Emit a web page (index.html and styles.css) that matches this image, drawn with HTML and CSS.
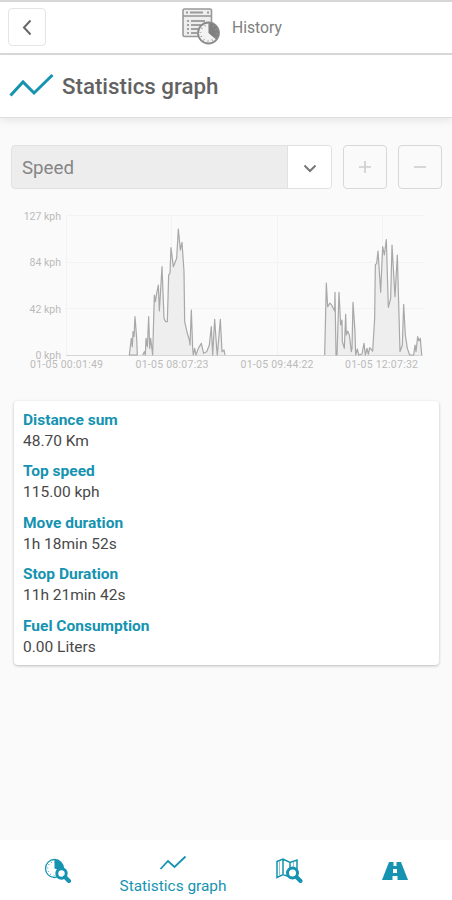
FILE: index.html
```html
<!DOCTYPE html>
<html lang="en">
<head>
<meta charset="utf-8">
<title>Statistics graph</title>
<link rel="stylesheet" href="styles.css">
</head>
<body>
<header class="topbar">
  <button class="back" aria-label="Back"><svg width="36" height="36" viewBox="0 0 36 36"><path d="M21.500 11.500 15 18.500 21.500 25.500"/></svg></button>
  <div class="section">
    <svg width="40" height="38" viewBox="0 0 40 38">
      <rect x="1" y="1" width="28.500" height="27.500" rx="1.500" fill="#eee" stroke="#999" stroke-width="1.600"/>
      <path d="M1 8h28" stroke="#999" stroke-width="1.600"/>
      <path d="M4 4.500h2M8 4.500h13M25 4.500h2" stroke="#999" stroke-width="2"/>
      <path d="M5 13h2M9 13h14M5 17h2M9 17h10M5 21h2M9 21h7M5 25h2M9 25h6" stroke="#888" stroke-width="1.600"/>
      <circle cx="26.500" cy="25" r="10.500" fill="#f3f3f3" stroke="#8a8a8a" stroke-width="1.800"/>
      <path d="M26.500 25V15a10 10 0 0 1 7.500 16.500z" fill="#808080"/>
      <circle cx="26.500" cy="25" r="8" fill="none" stroke="#999" stroke-width="2" stroke-dasharray=".8 3.390"/>
    </svg>
    <span>History</span>
  </div>
</header>
<div class="title">
  <svg width="46" height="26" viewBox="0 0 46 26"><path d="M1.500 22.500 14 9l11 11L43.500 2"/></svg>
  <h1>Statistics graph</h1>
</div>
<main>
  <div class="controls">
    <div class="select"><span>Speed</span><i><svg width="43" height="43" viewBox="0 0 43 43"><path d="m16.500 19.500 5.500 5.500 5.500-5.500"/></svg></i></div>
    <button aria-label="Zoom in"><svg width="42" height="42" viewBox="0 0 42 42"><path d="M15 21h12M21 15v12"/></svg></button>
    <button aria-label="Zoom out"><svg width="42" height="42" viewBox="0 0 42 42"><path d="M15 21h12"/></svg></button>
  </div>
  <svg class="chart" width="452" height="170" viewBox="0 205 452 170">
    <path class="grid" d="M66 215.500H424M66 262.500H424M66 308.500H424M66.500 215V356M171.500 215V356M277.500 215V356M382.500 215V356"/>
    <path class="axis" d="M66 355.500H423"/>
    <g transform="translate(110 205) scale(.33333)">
      <path class="series" d="M58 450 64 400 67 425 69 380 72 395 75 335 80 400 82 450ZM98 450 103 440 106 450 108 400 112 425 116 335 119 430 122 400 128 450 133 270 136 290 140 265 145 240 148 318 156 185 162 340 167 350 172 350 176 210 180 205 183 128 190 185 200 160 205 72 211 135 216 112 222 200 224 350 232 385 238 405 240 420 244 315 248 430 250 450 254 430 258 450 265 430 274 415 281 445 290 440 298 420 304 365 308 450 314 343 320 430 322 450 331 343 336 440 342 435 345 450"/>
    </g>
    <g transform="translate(310 205) scale(.33333)">
      <path class="series" d="M44 450 49 234 53 305 60 294 66 302 74 318 75 262 78 450 81 450 87 262 92 360 96 345 97 410 103 430 107 328 109 390 113 378 118 390 124 440 126 430 129 292 135 380 137 450 142 432 146 450 156 447 162 415 166 450 171 430 175 448 179 428 188 438 194 340 196 180 200 175 204 138 212 262 218 125 223 150 229 104 235 307 242 280 246 120 255 275 262 150 267 330 270 440 277 420 281 298 286 390 292 430 299 450 311 450 315 420 318 440 323 395 327 408 331 400 335 450"/>
    </g>
    <g class="labels" text-anchor="end">
      <text x="61" y="219.500">127 kph</text><text x="61" y="266">84 kph</text><text x="61" y="312.500">42 kph</text><text x="61" y="359">0 kph</text>
    </g>
    <g class="labels" text-anchor="middle">
      <text x="66.500" y="368" textLength="73">01-05 00:01:49</text><text x="172" y="368" textLength="73">01-05 08:07:23</text><text x="277" y="368" textLength="73">01-05 09:44:22</text><text x="381.500" y="368" textLength="73">01-05 12:07:32</text>
    </g>
  </svg>
  <dl class="card">
    <dt>Distance sum</dt><dd>48.70 Km</dd>
    <dt>Top speed</dt><dd>115.00 kph</dd>
    <dt>Move duration</dt><dd>1h 18min 52s</dd>
    <dt>Stop Duration</dt><dd>11h 21min 42s</dd>
    <dt>Fuel Consumption</dt><dd>0.00 Liters</dd>
  </dl>
</main>
<nav>
  <a><svg width="28" height="28" viewBox="0 0 28 28">
    <circle cx="11.500" cy="11.500" r="9" fill="#fff" stroke="#1593b0" stroke-width="1.300"/>
    <path d="M11.500 11.500V2.500a9 9 0 0 1 9 9v3z" fill="#1593b0"/>
    <circle cx="11.500" cy="11.500" r="6.800" fill="none" stroke="#1593b0" stroke-width="1.200" stroke-dasharray=".7 2.860"/>
    <circle cx="18.500" cy="16.500" r="4.700" fill="#fff" stroke="#1593b0" stroke-width="3"/>
    <path d="m22 20 4 4" stroke="#1593b0" stroke-width="4" stroke-linecap="round"/>
  </svg></a>
  <a class="active"><svg width="28" height="16" viewBox="0 0 28 16"><path d="M1.500 14 9 6l6.500 6L26.500 1.500" fill="none" stroke="#1593b0" stroke-width="1.800"/></svg><span>Statistics graph</span></a>
  <a><svg width="28" height="28" viewBox="0 0 28 28">
    <path d="M2 4.500 8 2l7 3.500 7-2.500v16l-7 1-7-2.500-6 3zM8 2v15.500M15 5.500V19" fill="#fff" stroke="#1593b0" stroke-width="1.500"/>
    <path d="M4.500 4v14M18.500 5v8" stroke="#8dc5d1"/>
    <circle cx="17.500" cy="16" r="5" fill="#fff" stroke="#1593b0" stroke-width="3"/>
    <path d="m21.500 20 4 4" stroke="#1593b0" stroke-width="4" stroke-linecap="round"/>
  </svg></a>
  <a><svg width="28" height="28" viewBox="0 0 28 28">
    <path d="M8 5h12l7 18H1z" fill="#1593b0"/>
    <path d="M12.500 5h3v4h-3zM12 12h4v4h-4zM11.500 19h5v4h-5z" fill="#fff"/>
  </svg></a>
</nav>
</body>
</html>
```

FILE: styles.css
```css
* { box-sizing: border-box; }
body {
  margin: 0;
  height: 900px;
  display: flex;
  flex-direction: column;
  background: #fafafa;
  font-family: Roboto, sans-serif;
  overflow: hidden;
}
button { padding: 0; font: inherit; }
svg { display: block; flex: none; }
.topbar {
  height: 55px;
  display: grid;
  grid-template-columns: 174px 1fr;
  align-items: center;
  padding: 0 8px 1px;
  background: #fff;
  border-top: 2px solid #d6d6d6;
  border-bottom: 2px solid #d9d9d9;
}
.back {
  width: 38px;
  height: 38px;
  border: 1px solid #e5e5e5;
  border-radius: 4px;
  background: #fff;
}
.back path { fill: none; stroke: #686868; stroke-width: 2; }
.section { display: flex; align-items: center; gap: 10px; color: #808080; font-size: 15.700px; }
.section span { padding-top: 1px; }
.title {
  height: 63px;
  display: flex;
  align-items: center;
  gap: 7px;
  padding: 0 9px;
  background: #fff;
  border-bottom: 1px solid #dedede;
  box-shadow: 0 3px 8px #00000014;
}
.title path { fill: none; stroke: #1593b0; stroke-width: 3; }
h1 { margin: 0; color: #626262; font-size: 22.300px; font-weight: 500; }
main { flex: 1; padding-top: 27px; }
.controls { display: flex; gap: 11px; padding: 0 10px 0 11px; }
.controls button {
  width: 44px;
  height: 44px;
  border: 1px solid #d8d8d8;
  border-radius: 4px;
  background: #fafafa;
}
.controls button path { stroke: #cecece; stroke-width: 1.600; }
.select {
  width: 321px;
  height: 44px;
  display: flex;
  border: 1px solid #e1e1e1;
  border-radius: 4px;
  background: #ededed;
  overflow: hidden;
}
.select span { flex: 1; padding: 10px; color: #858585; font-size: 18.700px; line-height: 24px; }
.select i { background: #fff; border-left: 1px solid #e1e1e1; }
.select path { fill: none; stroke: #777; stroke-width: 2; }
.chart { margin-top: 16px; }
.grid { fill: none; stroke: #f3f3f3; }
.axis { stroke: #d5d5d5; }
.series { fill: #eee; stroke: #a8a8a8; stroke-width: 3.600; stroke-linejoin: round; }
.labels { font-size: 10.500px; fill: #bbb; }
.card {
  margin: 26px 13px 0 14px;
  height: 264px;
  padding: 9px 9px 0;
  background: #fff;
  border-radius: 4px;
  box-shadow: 0 1px 3px #00000040;
  font-size: 15.500px;
}
dt { height: 21px; line-height: 21px; color: #1593b0; font-weight: 700; }
dd { margin: 0; height: 30.400px; line-height: 21px; color: #484848; }
nav { height: 60px; display: flex; background: #fff; }
nav a { width: 114px; display: flex; flex-direction: column; align-items: center; padding-top: 17px; color: #1593b0; }
nav a:last-child { width: 106px; padding-right: 9px; }
nav .active { width: 118px; gap: 5px; padding-top: 15px; font-size: 15.400px; line-height: 20px; }
nav .active span { white-space: nowrap; }
```
